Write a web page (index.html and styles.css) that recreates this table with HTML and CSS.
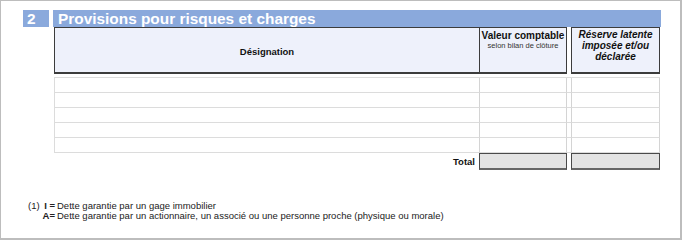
FILE: index.html
```html
<!DOCTYPE html>
<html lang="fr">
<head>
<meta charset="utf-8">
<link rel="stylesheet" href="styles.css">
</head>
<body>
<div class="frame">
  <div class="title">
    <div class="num">2</div>
    <div class="bar">Provisions pour risques et charges</div>
  </div>
  <div class="table">
    <div class="head">
      <div class="hcell desig">Désignation</div>
      <div class="hcell val"><b>Valeur comptable</b><span>selon bilan de clôture</span></div>
      <div class="sp"></div>
      <div class="hcell res">Réserve latente imposée et/ou déclarée</div>
    </div>
    <div class="rows">
      <div class="row"><div class="c c1"></div><div class="c c2"></div><div class="c c3"></div><div class="c c4"></div></div>
      <div class="row"><div class="c c1"></div><div class="c c2"></div><div class="c c3"></div><div class="c c4"></div></div>
      <div class="row"><div class="c c1"></div><div class="c c2"></div><div class="c c3"></div><div class="c c4"></div></div>
      <div class="row"><div class="c c1"></div><div class="c c2"></div><div class="c c3"></div><div class="c c4"></div></div>
      <div class="row"><div class="c c1"></div><div class="c c2"></div><div class="c c3"></div><div class="c c4"></div></div>
    </div>
    <div class="total">
      <div class="tlabel">Total</div>
      <div class="tbox"></div>
      <div></div>
      <div class="tbox"></div>
    </div>
  </div>
  <div class="notes">
    <div class="note"><span class="ref">(1)</span><span class="key">I =</span><span>Dette garantie par un gage immobilier</span></div>
    <div class="note"><span class="ref"></span><span class="key">A=</span><span>Dette garantie par un actionnaire, un associé ou une personne proche (physique ou morale)</span></div>
  </div>
</div>
</body>
</html>
```

FILE: styles.css
```css
html, body {
  margin: 0;
  padding: 0;
  background: #fff;
}
.frame {
  box-sizing: border-box;
  width: 682px;
  height: 240px;
  border: 1px solid #bdbdbd;
  border-width: 1px 2px 2px 1px;
  padding: 9px 0 0 22px;
  font-family: "Liberation Sans", Arial, sans-serif;
  color: #111;
}
.title {
  display: flex;
  height: 17px;
  gap: 4px;
  width: 638px;
}
.num, .bar {
  background: #8aa9dc;
  color: #fff;
  font-weight: bold;
  font-size: 15.4px;
  line-height: 17px;
}
.num {
  width: 22px;
  padding-left: 4px;
}
.bar {
  flex: 1;
  padding-left: 5px;
}
.table {
  margin-left: 31px;
  width: 606px;
}
.head {
  display: grid;
  grid-template-columns: 425px 88px 4px 89px;
  height: 47px;
}
.hcell {
  box-sizing: border-box;
  background: #eef1fb;
  border: 1px solid #3c3c3c;
  border-bottom-width: 2px;
  text-align: center;
  font-weight: bold;
  font-size: 10px;
}
.desig {
  display: flex;
  align-items: center;
  justify-content: center;
  font-size: 9.5px;
  border-right: none;
  padding-top: 3px;
}
.val {
  display: flex;
  flex-direction: column;
  align-items: center;
  padding-top: 2px;
  line-height: 12px;
}
.val span {
  font-weight: normal;
  font-size: 7.5px;
  line-height: 8px;
  color: #333;
}
.res {
  font-style: italic;
  line-height: 11px;
  padding: 1px 4px 0;
}
.rows {
  margin-top: 3px;
  border-top: 1px solid #dcdcdc;
}
.row {
  display: grid;
  grid-template-columns: 425px 88px 4px 89px;
  height: 15px;
}
.c {
  box-sizing: border-box;
  border-bottom: 1px solid #dcdcdc;
}
.c1 { border-left: 1px solid #dcdcdc; }
.c2 { border-left: 1px solid #d4d4d4; border-right: 1px solid #d4d4d4; }
.c4 { border-left: 1px solid #d4d4d4; border-right: 1px solid #d4d4d4; }
.total {
  display: grid;
  grid-template-columns: 425px 88px 4px 89px;
  height: 17px;
}
.tlabel {
  text-align: right;
  font-weight: bold;
  font-size: 9.5px;
  line-height: 17px;
  padding-right: 4px;
}
.tbox {
  box-sizing: border-box;
  background: #e3e3e3;
  border: 1px solid #4a4a4a;
  border-bottom: 2px solid #666;
}
.notes {
  margin-top: 31px;
  padding-left: 5px;
  font-size: 9.5px;
  line-height: 10px;
  color: #222;
}
.note {
  display: flex;
}
.ref {
  width: 13px;
}
.key {
  width: 14px;
  padding-right: 2px;
  text-align: right;
  font-weight: bold;
  white-space: nowrap;
}
```
